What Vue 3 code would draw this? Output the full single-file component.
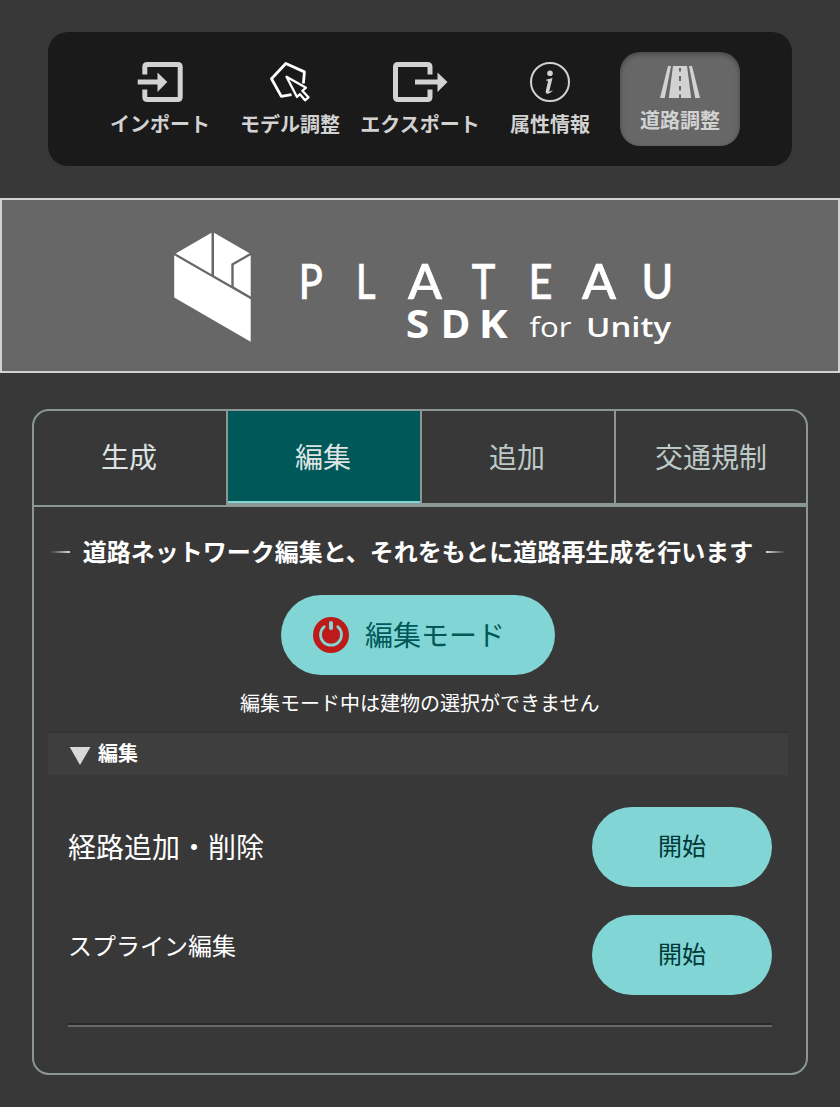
<script setup>
const tabs = [
  { label: '生成', cls: 'first' },
  { label: '編集', cls: 'active' },
  { label: '追加', cls: '' },
  { label: '交通規制', cls: '' },
]

// Wordmark letters: start position and advance width
const plateau = [
  ['P', 298.800, 24],
  ['L', 356, 19.5],
  ['A', 408, 34],
  ['T', 471.800, 23.600],
  ['E', 528.500, 24],
  ['A', 582, 34],
  ['U', 641.600, 31.800],
]
const sdk = [
  ['S', 405.800, 23.500],
  ['D', 440.500, 30],
  ['K', 478.800, 29],
]
</script>

<template>
  <div class="page">
    <nav class="toolbar">
      <div class="tool">
        <svg class="icon" width="60" height="40" viewBox="0 0 60 40">
          <path d="M14.800 12.500V5Q14.800 2.500 17.300 2.500H47.700Q50.200 2.500 50.200 5V35Q50.200 37.500 47.700 37.500H17.300Q14.800 37.500 14.800 35V27.500" fill="none" stroke="#d2d2d2" stroke-width="5" />
          <path d="M7.700 17.500H27.500V10.500L37.300 20L27.500 30V22.500H7.700Z" fill="#d2d2d2" />
        </svg>
        <span>インポート</span>
      </div>
      <div class="tool">
        <svg class="icon" width="60" height="40" viewBox="0 0 60 40" fill="none" stroke="#fff" stroke-width="2.800" stroke-linejoin="round">
          <path d="M43.400 21.500L44.400 9.900L25.800 1.500L11.500 16.700L21.300 34.400L31.500 32.700" />
          <path d="M26.500 14.700L46 25.700L42.300 28.800L48.500 35.300L45 38.300L40 32.200L37 35Z" stroke-width="2.300" />
        </svg>
        <span>モデル調整</span>
      </div>
      <div class="tool">
        <svg class="icon" width="60" height="40" viewBox="0 0 60 40">
          <path d="M40 12.500V5Q40 2.500 37.500 2.500H8Q5.500 2.500 5.500 5V35Q5.500 37.500 8 37.500H37.500Q40 37.500 40 35V27.500" fill="none" stroke="#d2d2d2" stroke-width="5" />
          <path d="M25 17.500H47.500V10.500L57.500 20L47.500 30V22.500H25Z" fill="#d2d2d2" />
        </svg>
        <span>エクスポート</span>
      </div>
      <div class="tool">
        <svg class="icon" width="60" height="40" viewBox="0 0 60 40">
          <circle cx="30" cy="20" r="19" fill="none" stroke="#d2d2d2" stroke-width="2" />
          <circle cx="30" cy="11.300" r="2.800" fill="#d2d2d2" />
          <path d="M26 17.800L32.500 16L29.300 29.200Q29.100 30.500 32.300 28.300L32.500 29Q29.500 32 27.300 31.800Q25.200 31.500 25.800 28.800L28 19.500Q28.200 18.300 26 18.500Z" fill="#d2d2d2" />
        </svg>
        <span>属性情報</span>
      </div>
      <div class="tool current">
        <svg class="icon" width="40" height="32" viewBox="0 0 40 32" fill="#d2d2d2">
          <path d="M8 0H11L4.800 32H0ZM29 0H32L40 32H35.200Z" />
          <path fill-rule="evenodd" d="M13 0H27L31.200 32H8.800ZM19 2V5.500H21V2ZM19 10V15H21V10ZM19 20V24.500H21V20ZM19 28.500V32H21V28.500Z" />
        </svg>
        <span>道路調整</span>
      </div>
    </nav>

    <header class="banner">
      <svg width="836" height="171" viewBox="2 200 836 171" fill="#fff">
        <path d="M211.500 232.700V274.300L175.700 253.500ZM214 232.700L249.500 253.300L231.300 263.800V285.500L214 275.500ZM233.700 265L250.700 255.200V296.400L233.700 286.600ZM174.200 255.200L250.700 299.200V341.800L174.200 297.500Z" />
        <text class="plateau" y="299"><tspan v-for="([ch, x, w], i) in plateau" :key="i" :x="x" :textLength="w" lengthAdjust="spacingAndGlyphs">{{ ch }}</tspan></text>
        <text class="sdk" y="338"><tspan v-for="([ch, x, w], i) in sdk" :key="i" :x="x" :textLength="w" lengthAdjust="spacingAndGlyphs">{{ ch }}</tspan></text>
        <text class="for" y="337" x="529.500" textLength="42" lengthAdjust="spacingAndGlyphs">for</text>
        <text class="unity" y="337" x="586" textLength="85" lengthAdjust="spacingAndGlyphs">Unity</text>
      </svg>
    </header>

    <main class="panel">
      <div class="tabs">
        <div v-for="tab in tabs" :key="tab.label" class="tab" :class="tab.cls">{{ tab.label }}</div>
      </div>

      <div class="title">
        <i class="dash"></i>
        <h1>道路ネットワーク編集と、それをもとに道路再生成を行います</h1>
        <i class="dash right"></i>
      </div>

      <button class="mode">
        <svg width="36" height="36" viewBox="0 0 36 36">
          <circle cx="18" cy="18" r="18" fill="#bd1a1a" />
          <path d="M11.200 9.700A10.500 10.500 0 1 0 24.800 9.700" fill="none" stroke="#81d5d4" stroke-width="2.800" stroke-linecap="round" />
          <path d="M18 6V11" stroke="#81d5d4" stroke-width="4" stroke-linecap="round" />
        </svg>
        <span>編集モード</span>
      </button>
      <p class="note">編集モード中は建物の選択ができません</p>

      <div class="fold">
        <svg width="22" height="18" viewBox="0 0 22 18"><path d="M-.3 0H20.500L10 18Z" fill="#d9d9d9" /></svg>
        <span>編集</span>
      </div>

      <section class="rows">
        <div class="row">
          <span class="large">経路追加・削除</span>
          <button class="start">開始</button>
        </div>
        <div class="row">
          <span class="small">スプライン編集</span>
          <button class="start">開始</button>
        </div>
      </section>
      <div class="rule"></div>
    </main>
  </div>
</template>

<style>
body {
  background: #383838;
}
</style>

<style scoped>
.page {
  box-sizing: border-box;
  width: 840px;
  height: 1107px;
  padding-top: 32px;
  background: #383838;
  font-family: "Noto Sans CJK JP", sans-serif;
  overflow: hidden;
}
.page button {
  border: 0;
  font-family: inherit;
}
svg {
  display: block;
  flex: none;
}
.toolbar {
  box-sizing: border-box;
  height: 134px;
  margin: 0 48px;
  padding: 20px 52px;
  border-radius: 20px;
  background: #1a1a1a;
  display: flex;
  gap: 10px;
}
.tool {
  box-sizing: border-box;
  width: 120px;
  height: 94px;
  padding-top: 10px;
  display: flex;
  flex-direction: column;
  align-items: center;
  gap: 8px;
  color: #d2d2d2;
  font-size: 20px;
  font-weight: 700;
  line-height: 28px;
  white-space: nowrap;
}
.current {
  padding-top: 14px;
  border-radius: 20px;
  background: #676767;
  box-shadow: inset 0 2px 5px rgba(0, 0, 0, 0.35);
}
.banner {
  box-sizing: border-box;
  height: 175px;
  margin-top: 32px;
  border: 2px solid #d2d2d2;
  background: #676767;
}
.plateau {
  font: 500 49px Lato, sans-serif;
  stroke: #fff;
  stroke-width: 0.7px;
}
.sdk {
  font: 700 39px "Open Sans", sans-serif;
}
.for {
  font: 400 27px "Open Sans", sans-serif;
}
.unity {
  font: 600 27px "Open Sans", sans-serif;
}
.panel {
  box-sizing: border-box;
  height: 666px;
  margin: 36px 32px 0;
  border: 2px solid #8b9794;
  border-radius: 17px;
  overflow: hidden;
}
.tabs {
  display: flex;
  height: 94px;
  border-bottom: 2px solid #8b9794;
}
.tab {
  box-sizing: border-box;
  width: 194px;
  padding-right: 2px;
  border-right: 2px solid #8b9794;
  border-bottom: 2px solid #8b9794;
  color: #bdc9c7;
  font-size: 28px;
  line-height: 90px;
  text-align: center;
}
.tab:last-child {
  width: 190px;
  padding-right: 0;
  border-right: 0;
}
.first {
  border-bottom: 0;
  color: #dee4e2;
}
.active {
  background: #005858;
  box-shadow: inset 0 -2px #81d5d4;
  color: #dee4e2;
}
.title {
  display: flex;
  justify-content: space-between;
  align-items: center;
  height: 36px;
  margin: 27px 20px 0 16px;
}
.title h1 {
  margin: -2px 0 0;
  color: #fff;
  font-size: 24px;
  font-weight: 700;
  line-height: 36px;
  white-space: nowrap;
}
.dash {
  width: 20px;
  height: 2px;
  background: linear-gradient(to right, transparent, #d9d9d9);
}
.right {
  background: linear-gradient(to left, transparent, #d9d9d9);
}
.mode {
  box-sizing: border-box;
  display: flex;
  align-items: center;
  gap: 16px;
  width: 274px;
  height: 80px;
  margin: 25px 0 0 247px;
  padding: 0 32px;
  border-radius: 40px;
  background: #81d5d4;
  color: #005858;
  font-size: 28px;
  line-height: 78px;
  white-space: nowrap;
}
.mode span {
  margin-top: -2px;
}
.note {
  margin: 13px 0 0 206px;
  color: #fff;
  font-size: 20px;
  line-height: 30px;
}
.fold {
  display: flex;
  align-items: center;
  gap: 6px;
  height: 42px;
  margin: 13px 18px 0 14px;
  padding-left: 22px;
  border-top: 2px solid #333;
  background: #3e3e3e;
  color: #fff;
  font-size: 20px;
  font-weight: 700;
  line-height: 40px;
}
.fold svg {
  margin-top: 4px;
  overflow: visible;
}
.fold span {
  margin-top: -2px;
}
.rows {
  display: grid;
  gap: 28px;
  margin: 32px 34px 0;
}
.row {
  display: flex;
  justify-content: space-between;
  align-items: center;
  height: 80px;
  color: #fff;
}
.large {
  margin-bottom: 2px;
  font-size: 28px;
}
.small {
  margin-bottom: 22px;
  font-size: 24px;
}
.start {
  width: 180px;
  height: 80px;
  padding: 0 0 5px;
  border-radius: 40px;
  background: #81d5d4;
  color: #003838;
  font-size: 24px;
}
.rule {
  height: 2px;
  margin: 28px 34px 0;
  border-top: 2px solid #2b2b2b;
  background: #686868;
}
</style>
